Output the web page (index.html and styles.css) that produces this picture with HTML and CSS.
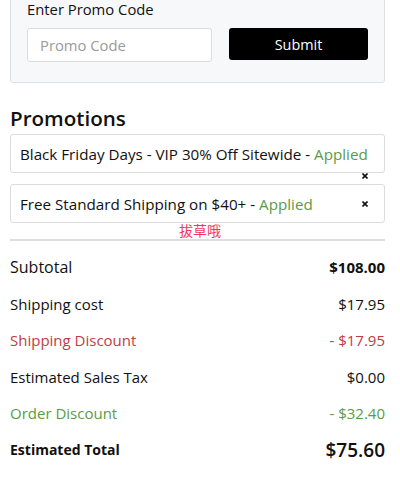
FILE: index.html
```html
<!DOCTYPE html>
<html>
<head>
<meta charset="utf-8">
<link rel="stylesheet" href="styles.css">
</head>
<body>
<div class="page">
  <section class="promo-form">
    <div class="promo-label">Enter Promo Code</div>
    <div class="promo-row">
      <input class="promo-input" type="text" placeholder="Promo Code">
      <button class="promo-submit">Submit</button>
    </div>
  </section>

  <h2 class="promos-title">Promotions</h2>
  <ul class="promo-list">
    <li class="promo">
      <span>Black Friday Days - VIP 30% Off Sitewide - <span class="applied">Applied</span></span>
      <span class="remove remove-low"><svg viewBox="0 0 6 6" width="6" height="6"><path d="M0.5 0.5L5.5 5.5M5.5 0.5L0.5 5.5" stroke="#111" stroke-width="1.6"/></svg></span>
    </li>
    <li class="promo">
      <span>Free Standard Shipping on $40+ - <span class="applied">Applied</span></span>
      <span class="remove"><svg viewBox="0 0 6 6" width="6" height="6"><path d="M0.5 0.5L5.5 5.5M5.5 0.5L0.5 5.5" stroke="#111" stroke-width="1.6"/></svg></span>
    </li>
  </ul>
  <div class="divider"></div>
  <span class="watermark">拔草哦</span>

  <div class="summary">
    <div class="row row-sub"><span>Subtotal</span><span class="strong">$108.00</span></div>
    <div class="row"><span>Shipping cost</span><span>$17.95</span></div>
    <div class="row red"><span>Shipping Discount</span><span>- $17.95</span></div>
    <div class="row"><span>Estimated Sales Tax</span><span>$0.00</span></div>
    <div class="row green"><span>Order Discount</span><span>- $32.40</span></div>
    <div class="row row-total"><span class="strong">Estimated Total</span><span class="total">$75.60</span></div>
  </div>
</div>
</body>
</html>
```

FILE: styles.css
```css
* { box-sizing: border-box; }
html, body { margin: 0; padding: 0; background: #fff; }
body {
  font-family: "Open Sans", "Noto Sans CJK SC", sans-serif;
  color: #111;
  overflow: hidden;
}
.page {
  position: relative;
  padding: 0 15px 0 10px;
}
.promo-form {
  margin-top: -10px;
  padding: 9px 16px 20px 16px;
  background: #f7f8fa;
  border: 1px solid #dfe0e2;
  border-radius: 3px;
}
.promo-label {
  font-size: 14.8px;
  line-height: 19px;
  margin-bottom: 9px;
}
.promo-row {
  display: flex;
  align-items: flex-start;
  gap: 17px;
}
.promo-input {
  width: 185px;
  height: 34px;
  border: 1px solid #dcdcdc;
  border-radius: 3px;
  background: #fff;
  padding: 0 12px;
  font-family: inherit;
  font-size: 14.8px;
  color: #333;
  outline: none;
}
.promo-input::placeholder { color: #9a9a9a; }
.promo-submit {
  width: 139px;
  height: 32px;
  background: #000;
  color: #fff;
  border: none;
  border-radius: 3px;
  font-family: inherit;
  font-size: 14.4px;
  padding: 0;
}
.promos-title {
  margin: 23px 0 4px;
  font-size: 20.6px;
  line-height: 24px;
  font-weight: 600;
}
.promo-list {
  list-style: none;
  margin: 0;
  padding: 0;
  display: flex;
  flex-direction: column;
  gap: 11px;
}
.promo {
  position: relative;
  height: 39px;
  border: 1px solid #dcdcdc;
  border-radius: 3px;
  padding: 0 9px;
  display: flex;
  align-items: center;
  font-size: 15.2px;
}
.applied { color: #5b9b46; }
.remove {
  position: absolute;
  right: 16px;
  top: 16px;
  width: 6px;
  height: 6px;
  display: flex;
}
.remove-low { top: 38px; }
.divider {
  margin-top: 16px;
  height: 2px;
  background: #dedede;
}
.watermark {
  position: absolute;
  left: 179px;
  top: 231px;
  font-family: "Noto Sans CJK SC", sans-serif;
  font-size: 14px;
  line-height: 18px;
  color: #f2365b;
}
.summary { margin-top: 8px; }
.row {
  display: flex;
  justify-content: space-between;
  align-items: baseline;
  padding: 8.25px 0;
  font-size: 15px;
  line-height: 20px;
}
.row-sub { font-size: 16px; }
.row-sub .strong { font-size: 15px; }
.strong { font-weight: 700; }
.red { color: #c23b44; }
.green { color: #5b9b46; }
.row-total { align-items: center; }
.row-total .strong { font-size: 14px; }
.total { font-size: 19px; font-weight: 600; }
```
